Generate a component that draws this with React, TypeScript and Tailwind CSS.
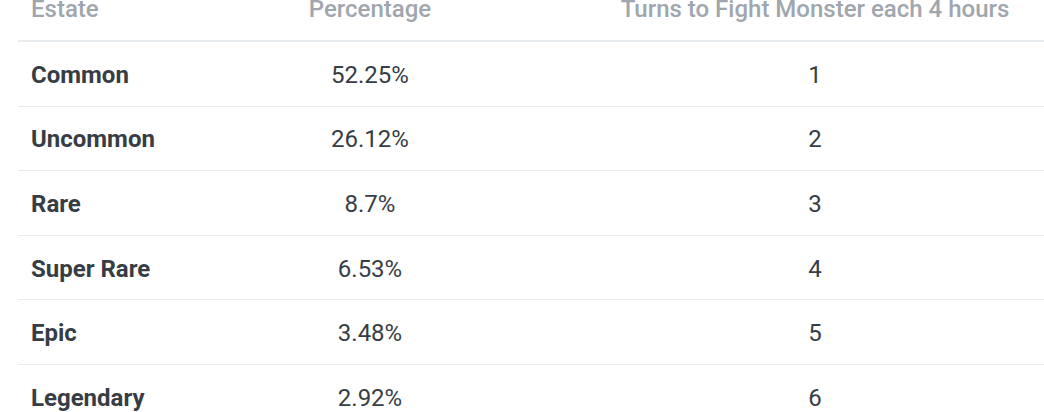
import React from "react";

const rows = [
  ["Common", "52.25%", "1"],
  ["Uncommon", "26.12%", "2"],
  ["Rare", "8.7%", "3"],
  ["Super Rare", "6.53%", "4"],
  ["Epic", "3.48%", "5"],
  ["Legendary", "2.92%", "6"],
];

export default function App() {
  return (
    <div className="w-[1044px] h-[412px] overflow-hidden bg-white" style={{ fontFamily: "Roboto, 'Liberation Sans', sans-serif" }}>
      <div className="ml-[18px] w-[1026px] -mt-[6px]">
        <div className="flex h-[48px] items-start border-b-2 border-[#e9ecef] text-[24px] font-medium text-[#a0a6ad] leading-[30px]">
          <div className="w-[136px] pl-[13px]">Estate</div>
          <div className="w-[432px] text-center">Percentage</div>
          <div className="w-[458px] text-center whitespace-nowrap">Turns to Fight Monster each 4 hours</div>
        </div>
        {rows.map((r) => (
          <div key={r[0]} className="flex h-[64.6px] items-center pt-[2px] border-b border-[#e9ecef] text-[24px] text-[#373d44] leading-[30px]">
            <div className="w-[136px] pl-[13px] font-bold whitespace-nowrap">{r[0]}</div>
            <div className="w-[432px] text-center">{r[1]}</div>
            <div className="w-[458px] text-center">{r[2]}</div>
          </div>
        ))}
      </div>
    </div>
  );
}
